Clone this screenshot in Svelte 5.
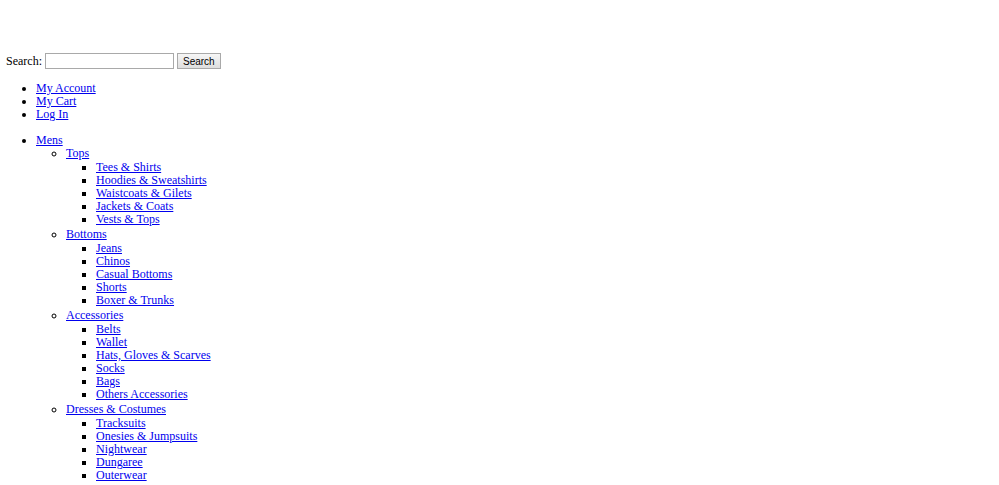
<script lang="ts">
    interface Category {
        name: string
        items: string[]
    }

    const accountLinks = ['My Account', 'My Cart', 'Log In']

    const mens: Category[] = [
        { name: 'Tops', items: ['Tees & Shirts', 'Hoodies & Sweatshirts', 'Waistcoats & Gilets', 'Jackets & Coats', 'Vests & Tops'] },
        { name: 'Bottoms', items: ['Jeans', 'Chinos', 'Casual Bottoms', 'Shorts', 'Boxer & Trunks'] },
        { name: 'Accessories', items: ['Belts', 'Wallet', 'Hats, Gloves & Scarves', 'Socks', 'Bags', 'Others Accessories'] },
        { name: 'Dresses & Costumes', items: ['Tracksuits', 'Onesies & Jumpsuits', 'Nightwear', 'Dungaree', 'Outerwear'] },
    ]

    let query = $state('')
</script>

<div class="page">
    <form class="search" onsubmit={(e) => e.preventDefault()}>
        <label for="search">Search:</label>
        <input id="search" type="text" name="q" bind:value={query} />
        <button type="submit">Search</button>
    </form>

    <ul class="links">
        {#each accountLinks as link}
            <li><a href="#top">{link}</a></li>
        {/each}
    </ul>

    <ul class="nav">
        <li>
            <a href="#mens">Mens</a>
            <ul>
                {#each mens as category}
                    <li>
                        <a href="#mens">{category.name}</a>
                        <ul class="items">
                            {#each category.items as item}
                                <li><a href="#mens">{item}</a></li>
                            {/each}
                        </ul>
                    </li>
                {/each}
            </ul>
        </li>
    </ul>
</div>

<style>
    :global(body) {
        margin: 0;
        background: #fff;
    }

    .page {
        padding: 53px 6px 0;
        color: #000;
        font-family: "Liberation Serif", "Times New Roman", serif;
        font-size: 12px;
        line-height: 13px;
    }

    .search {
        display: flex;
        align-items: center;
        gap: 3px;
        line-height: 16px;
    }

    input {
        box-sizing: border-box;
        width: 129px;
        height: 16px;
        padding: 1px;
        border: 1px solid #a9a9a9;
        font: 10px "Liberation Sans", Arial, sans-serif;
    }

    button {
        box-sizing: border-box;
        height: 16px;
        padding: 0 5px;
        border: 1px solid #a9a9a9;
        background: linear-gradient(#f6f6f6, #dedede);
        color: #000;
        font: 10px "Liberation Sans", Arial, sans-serif;
    }

    ul {
        margin: 0;
        padding-left: 30px;
    }

    .links,
    .nav {
        margin-top: 13px;
    }

    .items {
        padding-top: 1px;
        padding-bottom: 2px;
    }

    a {
        color: #0000ee;
        text-decoration: underline;
    }
</style>
